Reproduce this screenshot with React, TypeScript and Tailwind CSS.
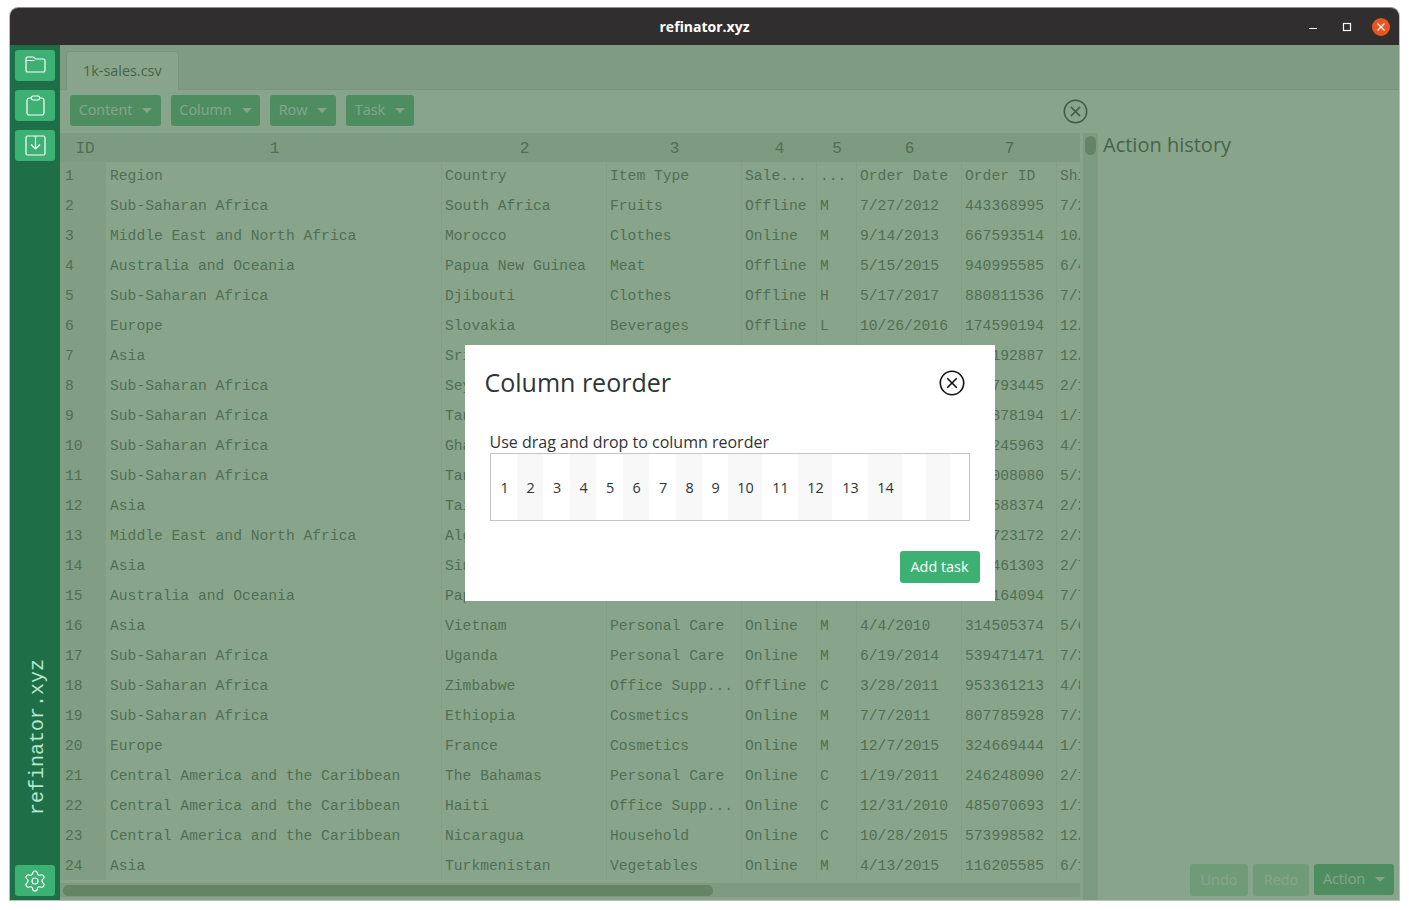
import { Settings } from "lucide-react"

const sans = "font-['Open_Sans','Noto_Sans',sans-serif]"
const mono = "font-['Liberation_Mono','DejaVu_Sans_Mono',monospace]"

const columns = [
  { label: "1", width: "w-[335px]" },
  { label: "2", width: "w-[165px]" },
  { label: "3", width: "w-[135px]" },
  { label: "4", width: "w-[75px]" },
  { label: "5", width: "w-[40px]" },
  { label: "6", width: "w-[105px]" },
  { label: "7", width: "w-[95px]" },
  { label: "", width: "w-[24px]" },
]

const rows = [
  ["Region", "Country", "Item Type", "Sale...", "...", "Order Date", "Order ID", "Ship Date"],
  ["Sub-Saharan Africa", "South Africa", "Fruits", "Offline", "M", "7/27/2012", "443368995", "7/28/2012"],
  ["Middle East and North Africa", "Morocco", "Clothes", "Online", "M", "9/14/2013", "667593514", "10/19/2013"],
  ["Australia and Oceania", "Papua New Guinea", "Meat", "Offline", "M", "5/15/2015", "940995585", "6/4/2015"],
  ["Sub-Saharan Africa", "Djibouti", "Clothes", "Offline", "H", "5/17/2017", "880811536", "7/2/2017"],
  ["Europe", "Slovakia", "Beverages", "Offline", "L", "10/26/2016", "174590194", "12/4/2016"],
  ["Asia", "Sri Lanka", "Fruits", "Online", "L", "11/7/2011", "830192887", "12/18/2011"],
  ["Sub-Saharan Africa", "Seychelles", "Beverages", "Online", "M", "1/18/2013", "425793445", "2/16/2013"],
  ["Sub-Saharan Africa", "Tanzania", "Beverages", "Online", "L", "11/30/2016", "659878194", "1/16/2017"],
  ["Sub-Saharan Africa", "Ghana", "Office Supp...", "Online", "L", "3/23/2017", "601245963", "4/15/2017"],
  ["Sub-Saharan Africa", "Tanzania", "Cosmetics", "Offline", "L", "5/23/2016", "739008080", "5/24/2016"],
  ["Asia", "Taiwan", "Fruits", "Offline", "C", "2/9/2014", "732588374", "2/23/2014"],
  ["Middle East and North Africa", "Algeria", "Cosmetics", "Online", "M", "2/18/2011", "761723172", "2/24/2011"],
  ["Asia", "Singapore", "Snacks", "Online", "C", "1/28/2013", "176461303", "2/7/2013"],
  ["Australia and Oceania", "Papua New Guinea", "Clothes", "Offline", "H", "6/20/2014", "726164094", "7/7/2014"],
  ["Asia", "Vietnam", "Personal Care", "Online", "M", "4/4/2010", "314505374", "5/6/2010"],
  ["Sub-Saharan Africa", "Uganda", "Personal Care", "Online", "M", "6/19/2014", "539471471", "7/2/2014"],
  ["Sub-Saharan Africa", "Zimbabwe", "Office Supp...", "Offline", "C", "3/28/2011", "953361213", "4/8/2011"],
  ["Sub-Saharan Africa", "Ethiopia", "Cosmetics", "Online", "M", "7/7/2011", "807785928", "7/25/2011"],
  ["Europe", "France", "Cosmetics", "Online", "M", "12/7/2015", "324669444", "1/18/2016"],
  ["Central America and the Caribbean", "The Bahamas", "Personal Care", "Online", "C", "1/19/2011", "246248090", "2/1/2011"],
  ["Central America and the Caribbean", "Haiti", "Office Supp...", "Online", "C", "12/31/2010", "485070693", "1/19/2011"],
  ["Central America and the Caribbean", "Nicaragua", "Household", "Online", "C", "10/28/2015", "573998582", "12/1/2015"],
  ["Asia", "Turkmenistan", "Vegetables", "Online", "M", "4/13/2015", "116205585", "6/1/2015"],
]

const reorderCells = [
  { label: "1", width: "w-[26px]" },
  { label: "2", width: "w-[26px]" },
  { label: "3", width: "w-[27px]" },
  { label: "4", width: "w-[26px]" },
  { label: "5", width: "w-[27px]" },
  { label: "6", width: "w-[26px]" },
  { label: "7", width: "w-[27px]" },
  { label: "8", width: "w-[26px]" },
  { label: "9", width: "w-[26px]" },
  { label: "10", width: "w-[34px]" },
  { label: "11", width: "w-[36px]" },
  { label: "12", width: "w-[34px]" },
  { label: "13", width: "w-[36px]" },
  { label: "14", width: "w-[34px]" },
  { label: "", width: "w-[24px]" },
  { label: "", width: "w-[24px]" },
]

function Caret() {
  return <span className="w-0 h-0 border-x-[5px] border-x-transparent border-t-[5px] border-t-current" />
}

function CloseCircle({ className }: { className: string }) {
  return (
    <svg viewBox="0 0 26 26" fill="none" stroke="currentColor" strokeWidth="1.6" className={className}>
      <circle cx="13" cy="13" r="11.7" />
      <path d="M8.2 8.2l9.6 9.6M17.8 8.2l-9.6 9.6" />
    </svg>
  )
}

function FolderIcon() {
  return (
    <svg width="21" height="17" viewBox="0 0 21 17" fill="none" stroke="currentColor" strokeWidth="1.2">
      <path d="M1 4.5V2.6C1 1.7 1.7 1 2.6 1h5.2c.5 0 .9.2 1.2.5L10.6 3H18.4c.9 0 1.6.7 1.6 1.6v9.8c0 .9-.7 1.6-1.6 1.6H2.6C1.700 16 1 15.300 1 14.400V4.500z" />
      <path d="M1 4.500h8.500" />
    </svg>
  )
}

function ClipboardIcon() {
  return (
    <svg width="19" height="21" viewBox="0 0 19 21" fill="none" stroke="currentColor" strokeWidth="1.2">
      <path d="M5.500 3H3.200C2 3 1 4 1 5.200v12.600C1 19 2 20 3.200 20h12.600c1.200 0 2.200-1 2.200-2.200V5.200C18 4 17 3 15.800 3h-2.300" />
      <rect x="5.500" y="1" width="8" height="4" rx="1.500" />
    </svg>
  )
}

function SaveIcon() {
  return (
    <svg width="21" height="21" viewBox="0 0 21 21" fill="none" stroke="currentColor" strokeWidth="1.2">
      <path d="M6.500 1H2.500C1.700 1 1 1.700 1 2.500v16c0 .8.7 1.500 1.500 1.500h16c.8 0 1.500-.7 1.500-1.500v-16C20 1.700 19.300 1 18.500 1h-4" />
      <path d="M6.500 1h8M10.500 1v12.500M6 9.500l4.500 4.500L15 9.500" />
    </svg>
  )
}

function Sidebar() {
  return (
    <aside className="w-[50px] shrink-0 bg-[#1e6e48] flex flex-col items-center pt-[5px] pb-1">
      <div className="flex flex-col gap-[9px]">
        <button className="w-10 h-[31px] pb-[2px] rounded-[3px] bg-[#3cb173] text-white flex items-center justify-center">
          <FolderIcon />
        </button>
        <button className="w-10 h-[31px] rounded-[3px] bg-[#3cb173] text-white flex items-center justify-center">
          <ClipboardIcon />
        </button>
        <button className="w-10 h-[31px] rounded-[3px] bg-[#3cb173] text-white flex items-center justify-center">
          <SaveIcon />
        </button>
      </div>
      <div
        className={`mt-auto mb-[50px] ml-[5px] [writing-mode:vertical-rl] rotate-180 text-[20px] leading-none text-[#b5e5cb] ${mono}`}
      >
        refinator.xyz
      </div>
      <button className="w-10 h-[31px] rounded-[3px] bg-[#3cb173] text-white flex items-center justify-center">
        <Settings size={24} strokeWidth={1.15} />
      </button>
    </aside>
  )
}

function ToolbarButton({ label, width }: { label: string; width: string }) {
  return (
    <button className={`${width} h-[31px] pb-px rounded-[3px] bg-[#3cb173] text-white text-[14.4px] flex items-center justify-center gap-[10px]`}>
      {label}
      <Caret />
    </button>
  )
}

function DataTable() {
  return (
    <div className={`w-[1020px] flex flex-col overflow-hidden text-[#454a48] ${mono}`}>
      <div className="flex h-[29px] pt-[2px] bg-[#dadfdc] text-[16px] items-center">
        <div className="w-[46px] shrink-0 pl-[4px] text-center">ID</div>
        {columns.map((col) => (
          <div key={col.width + col.label} className={`${col.width} shrink-0 pl-[2px] text-center`}>
            {col.label}
          </div>
        ))}
      </div>
      {rows.map((row, i) => (
        <div key={i} className={`flex text-[14.67px] ${i === 0 ? "h-[28px]" : "h-[30px]"}`}>
          <div className={`w-[46px] h-full shrink-0 bg-[#e6e8e7] pl-[5px] flex items-center ${i === 0 ? "" : "pt-[2px]"}`}>{i + 1}</div>
          {row.map((cell, c) => (
            <div
              key={c}
              className={`${columns[c].width} h-full shrink-0 flex items-center overflow-hidden whitespace-nowrap ${c === 0 ? "pl-1" : "pl-[3px] border-l border-[#eaecea]"} ${i === 0 ? "" : "pt-[2px]"}`}
            >
              {cell}
            </div>
          ))}
        </div>
      ))}
      <div className="mt-[3px] w-[1020px] h-[14px] bg-[#dadfdc] flex items-center px-[3px]">
        <div className="w-[650px] h-[11px] rounded-full bg-[#2f4a33]/50" />
      </div>
    </div>
  )
}

function ReorderModal() {
  return (
    <div className={`w-[530px] h-[256px] bg-white flex flex-col text-[#2f3438] ${sans}`}>
      <div className="h-[76px] shrink-0 flex items-center justify-between pl-5 pr-[30px]">
        <h2 className="text-[25px] leading-none">Column reorder</h2>
        <CloseCircle className="w-[26px] h-[26px] text-[#111]" />
      </div>
      <div className="mt-[10px] px-[25px]">
        <p className="text-[16px] leading-[22px]">Use drag and drop to column reorder</p>
        <div className="flex h-[68px] border border-[#c4c4c4]">
          {reorderCells.map((cell, i) => (
            <div
              key={i}
              className={`${cell.width} h-full pl-[2px] pt-[2px] flex items-center justify-center text-[14.4px] ${i % 2 === 1 ? "bg-[#f8f8f8]" : ""}`}
            >
              {cell.label}
            </div>
          ))}
        </div>
      </div>
      <div className="mt-[30px] pr-[15px] flex justify-end">
        <button className="w-[80px] h-[32px] rounded-[3px] bg-[#3cb173] text-white text-[14.4px]">Add task</button>
      </div>
    </div>
  )
}

export default function App() {
  return (
    <div className="w-[1409px] h-[910px] bg-white pt-[7px] pl-[9px]">
      <div className="w-[1391px] h-[894px] border border-[#bdbdbd] border-t-[#8f8f8f] rounded-t-[9px] overflow-hidden flex flex-col">
        <header className="h-[37px] shrink-0 bg-[#302e2e] flex items-center pr-[9px]">
          <div className={`flex-1 pl-[91px] text-center text-white text-[14px] font-bold ${sans}`}>refinator.xyz</div>
          <div className="flex items-center text-white">
            <svg width="10" height="10" viewBox="0 0 10 10" className="mr-[24px]">
              <path d="M1 6.500h8" stroke="currentColor" strokeWidth="1" />
            </svg>
            <svg width="10" height="10" viewBox="0 0 10 10" className="mr-[20px]">
              <rect x="1.500" y="1.500" width="7" height="7" fill="none" stroke="currentColor" strokeWidth="1.200" />
            </svg>
            <span className="w-[18px] h-[18px] rounded-full bg-[#e95420] flex items-center justify-center">
              <svg width="10" height="10" viewBox="0 0 10 10">
                <path d="M1.500 1.500l7 7M8.500 1.500l-7 7" stroke="currentColor" strokeWidth="1.300" />
              </svg>
            </span>
          </div>
        </header>

        <div className="flex-1 flex min-h-0">
          <Sidebar />

          <main className={`relative flex-1 bg-white flex flex-col min-w-0 text-[#212529] ${sans}`}>
            <div className="h-[45px] shrink-0 bg-[#dfe2e0] border-b border-[#c9cfcb] pl-[6px] flex items-end">
              <div className="w-[113px] h-[39px] -mb-px bg-white border border-b-0 border-[#c9cfcb] rounded-t-[4px] flex items-center pl-4 text-[14.4px]">
                1k-sales.csv
              </div>
            </div>

            <div className="flex-1 flex min-h-0">
              <div className="w-[1039px] shrink-0 flex flex-col">
                <div className="h-[43px] shrink-0 pl-[10px] pr-[11px] pt-[5px] flex items-start gap-[10px]">
                  <ToolbarButton label="Content" width="w-[91px]" />
                  <ToolbarButton label="Column" width="w-[89px]" />
                  <ToolbarButton label="Row" width="w-[66px]" />
                  <ToolbarButton label="Task" width="w-[68px]" />
                  <CloseCircle className="ml-auto mt-[4px] w-[25px] h-[25px] text-[#111]" />
                </div>
                <div className="flex-1 flex min-h-0">
                  <DataTable />
                  <div className="ml-[3px] w-[15px] shrink-0 bg-[#dadfdc] pt-[3px] flex justify-center">
                    <div className="w-[11px] h-[19px] rounded-full bg-[#2f4a33]/50" />
                  </div>
                </div>
              </div>

              <div className="flex-1 flex flex-col pl-[4px] pr-[5px] pb-[4px]">
                <div className="mt-[42px] text-[20px] leading-[26px]">Action history</div>
                <div className="mt-auto flex justify-end items-start gap-[5px] text-[14.4px] text-white">
                  <button className="w-[58px] h-[32px] rounded-[3px] bg-[#3cb173] opacity-40">Undo</button>
                  <button className="w-[56px] h-[32px] rounded-[3px] bg-[#3cb173] opacity-40">Redo</button>
                  <button className="w-[80px] h-[31px] pb-px rounded-[3px] bg-[#3cb173] flex items-center justify-center gap-[10px]">
                    Action
                    <Caret />
                  </button>
                </div>
              </div>
            </div>

            {/* modal backdrop */}
            <div className="absolute inset-0 bg-[#557e58]/70 flex items-center justify-center">
              <ReorderModal />
            </div>
          </main>
        </div>
      </div>
    </div>
  )
}
